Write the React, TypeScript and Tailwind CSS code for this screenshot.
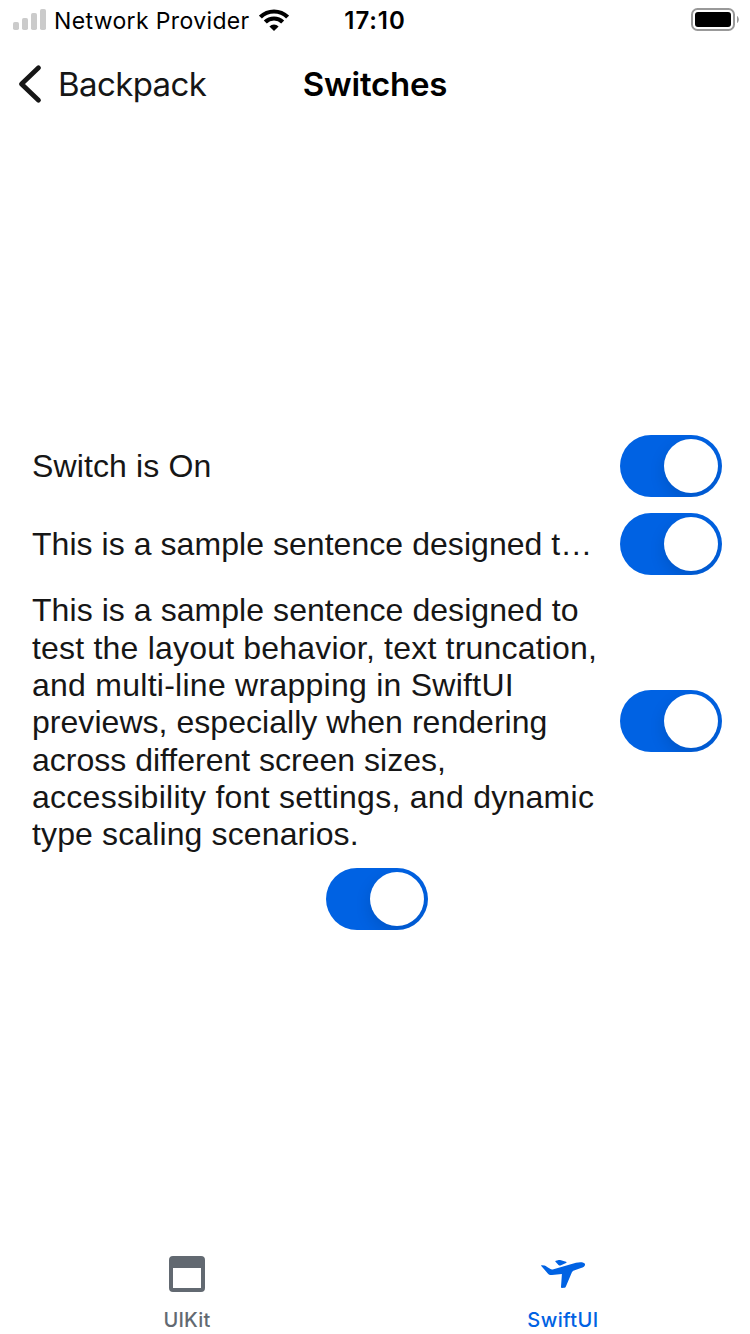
import { useState } from "react";

function Toggle() {
  const [on, setOn] = useState(true);
  return (
    <button
      role="switch"
      aria-checked={on}
      onClick={() => setOn(!on)}
      className={`flex h-[62px] w-[102px] shrink-0 items-center overflow-hidden rounded-full px-1 ${on ? "justify-end bg-[#0062e3]" : "justify-start bg-gray-200"}`}
    >
      <span className="size-[54px] rounded-full bg-white shadow-[0_6px_16px_rgba(0,0,0,0.13)]" />
    </button>
  );
}

const lines = [
  { text: "This is a sample sentence designed to", style: "tracking-[0.06px]" },
  { text: "test the layout behavior, text truncation,", style: "tracking-[0.2px]" },
  { text: "and multi-line wrapping in SwiftUI", style: "tracking-[0.26px]" },
  { text: "previews, especially when rendering", style: "tracking-[0.04px]" },
  { text: "across different screen sizes,", style: "tracking-[0px]" },
  { text: "accessibility font settings, and dynamic", style: "tracking-[0.27px]" },
  { text: "type scaling scenarios.", style: "tracking-[0.13px]" },
];

function StatusBar() {
  return (
    <div className="grid h-10 grid-cols-[1fr_auto_1fr] items-center px-[13px] text-[23px] text-black">
      <div className="flex items-center">
        <svg width="33" height="22" viewBox="0 0 33 22" fill="#cbcbcb">
          <rect x="0" y="13" width="6" height="8" rx="1.8" />
          <rect x="9" y="9" width="6" height="12" rx="1.8" />
          <rect x="18" y="4" width="6" height="17" rx="1.8" />
          <rect x="27" y="0" width="6" height="21" rx="1.8" />
        </svg>
        <span className="ml-2 whitespace-nowrap pt-0.5 leading-[38px] tracking-[0.36px]">Network Provider</span>
        <svg className="ml-[9px] shrink-0" width="30" height="22" viewBox="0 0 30 22" fill="none" stroke="#000" strokeWidth="4.2">
          <path d="M1.400 8.100a19.300 19.300 0 0 1 27.200 0" />
          <path d="M6.300 13.100a12.300 12.300 0 0 1 17.400 0" />
          <path d="M15 22l-4.600-4.600a6.500 6.500 0 0 1 9.200 0z" fill="#000" stroke="none" />
        </svg>
      </div>
      <span className="pt-0.5 text-[24px] font-semibold leading-[38px] tracking-[0.9px]">17:10</span>
      <svg className="-mr-0.5 justify-self-end" width="48" height="24" viewBox="0 0 48 24">
        <rect x="1" y="1" width="42" height="21" rx="5.5" fill="none" stroke="#999" strokeWidth="2" />
        <rect x="4" y="4" width="36" height="15" rx="3" fill="#000" />
        <path d="M46 8c2.400 1.200 2.400 5.800 0 7z" fill="#999" />
      </svg>
    </div>
  );
}

export default function App() {
  return (
    <div className="flex h-[1334px] w-[750px] flex-col bg-white font-['Inter',sans-serif]">
      <StatusBar />
      <header className="grid h-[88px] grid-cols-[1fr_auto_1fr] items-center px-[18px] text-[33px]">
        <button className="flex items-center text-[#161616]">
          <svg width="24" height="40" viewBox="0 0 24 40" fill="none" stroke="currentColor" strokeWidth="4.8" strokeLinecap="round" strokeLinejoin="round">
            <path d="M20.500 3.800L3.500 20 20.500 36.200" />
          </svg>
          <span className="ml-4 pt-0.5 tracking-[-0.6px]">Backpack</span>
        </button>
        <h1 className="pt-0.5 font-semibold tracking-[-0.2px] text-black">Switches</h1>
      </header>
      <main className="flex flex-1 flex-col pl-8 pr-7 pt-[307px] font-['Liberation_Sans',Arial,sans-serif] text-[32px] text-[#161616]">
        <div className="flex items-center justify-between">
          <span className="tracking-[0.13px]">Switch is On</span>
          <Toggle />
        </div>
        <div className="mt-4 flex items-center justify-between">
          <span className="whitespace-nowrap tracking-[0.05px]">This is a sample sentence designed t…</span>
          <Toggle />
        </div>
        <div className="mt-4 flex h-[260px] items-center justify-between">
          <p className="pt-[4.2px] leading-[37.33px]">
            {lines.map((line) => (
              <span key={line.text} className={`block whitespace-nowrap ${line.style}`}>{line.text}</span>
            ))}
          </p>
          <Toggle />
        </div>
        <div className="mt-[17px] flex justify-center px-1">
          <Toggle />
        </div>
      </main>
      <nav className="grid h-[98px] grid-cols-[374px_376px] text-[20px] font-medium">
        <button className="flex flex-col items-center pt-5 text-[#626971]">
          <svg width="36" height="36" viewBox="0 0 36 36" fill="currentColor">
            <path fillRule="evenodd" d="M4 0h28a4 4 0 0 1 4 4v28a4 4 0 0 1-4 4H4a4 4 0 0 1-4-4V4a4 4 0 0 1 4-4zm0 12v20h28V12z" />
          </svg>
          <span className="mt-3 pt-px leading-[30px] tracking-[0.2px]">UIKit</span>
        </button>
        <button className="flex flex-col items-center pl-0.5 pt-5 text-[#0062e3]">
          <svg width="46" height="36" viewBox="0 0 46 36" fill="currentColor">
            <path d="M1.300 9.900C0.800 9.500 1.300 9 2 9.200L4.500 9.500C5.500 9.700 6 10.200 6.700 10.800L10.500 13.100C11.500 13.700 12.500 13.500 13.500 13.200L36 6.700C40 5.700 44.300 6 45 8C45.400 10.200 43.500 11.300 41 12L34 14.500C33 14.900 32.300 15.400 31.900 16.300L26 30.200C25.600 31.200 25 31.700 24 31.800L22 32C21.300 32.100 21 31.700 21 31L21.900 18L12 19C10.200 19.200 9 18.700 7.800 17.500L1.300 9.900Z" />
            <path d="M15.500 5.700C15 5.300 15.300 4.900 15.900 4.700L18 4.200C19 3.900 20 4 21 4.300L26 5.700C26.800 6 26.700 6.600 26 6.900L21 9.300C20 9.700 19.200 9.500 18.500 8.900Z" />
          </svg>
          <span className="mt-3 pt-px leading-[30px] tracking-[0.4px]">SwiftUI</span>
        </button>
      </nav>
    </div>
  );
}
